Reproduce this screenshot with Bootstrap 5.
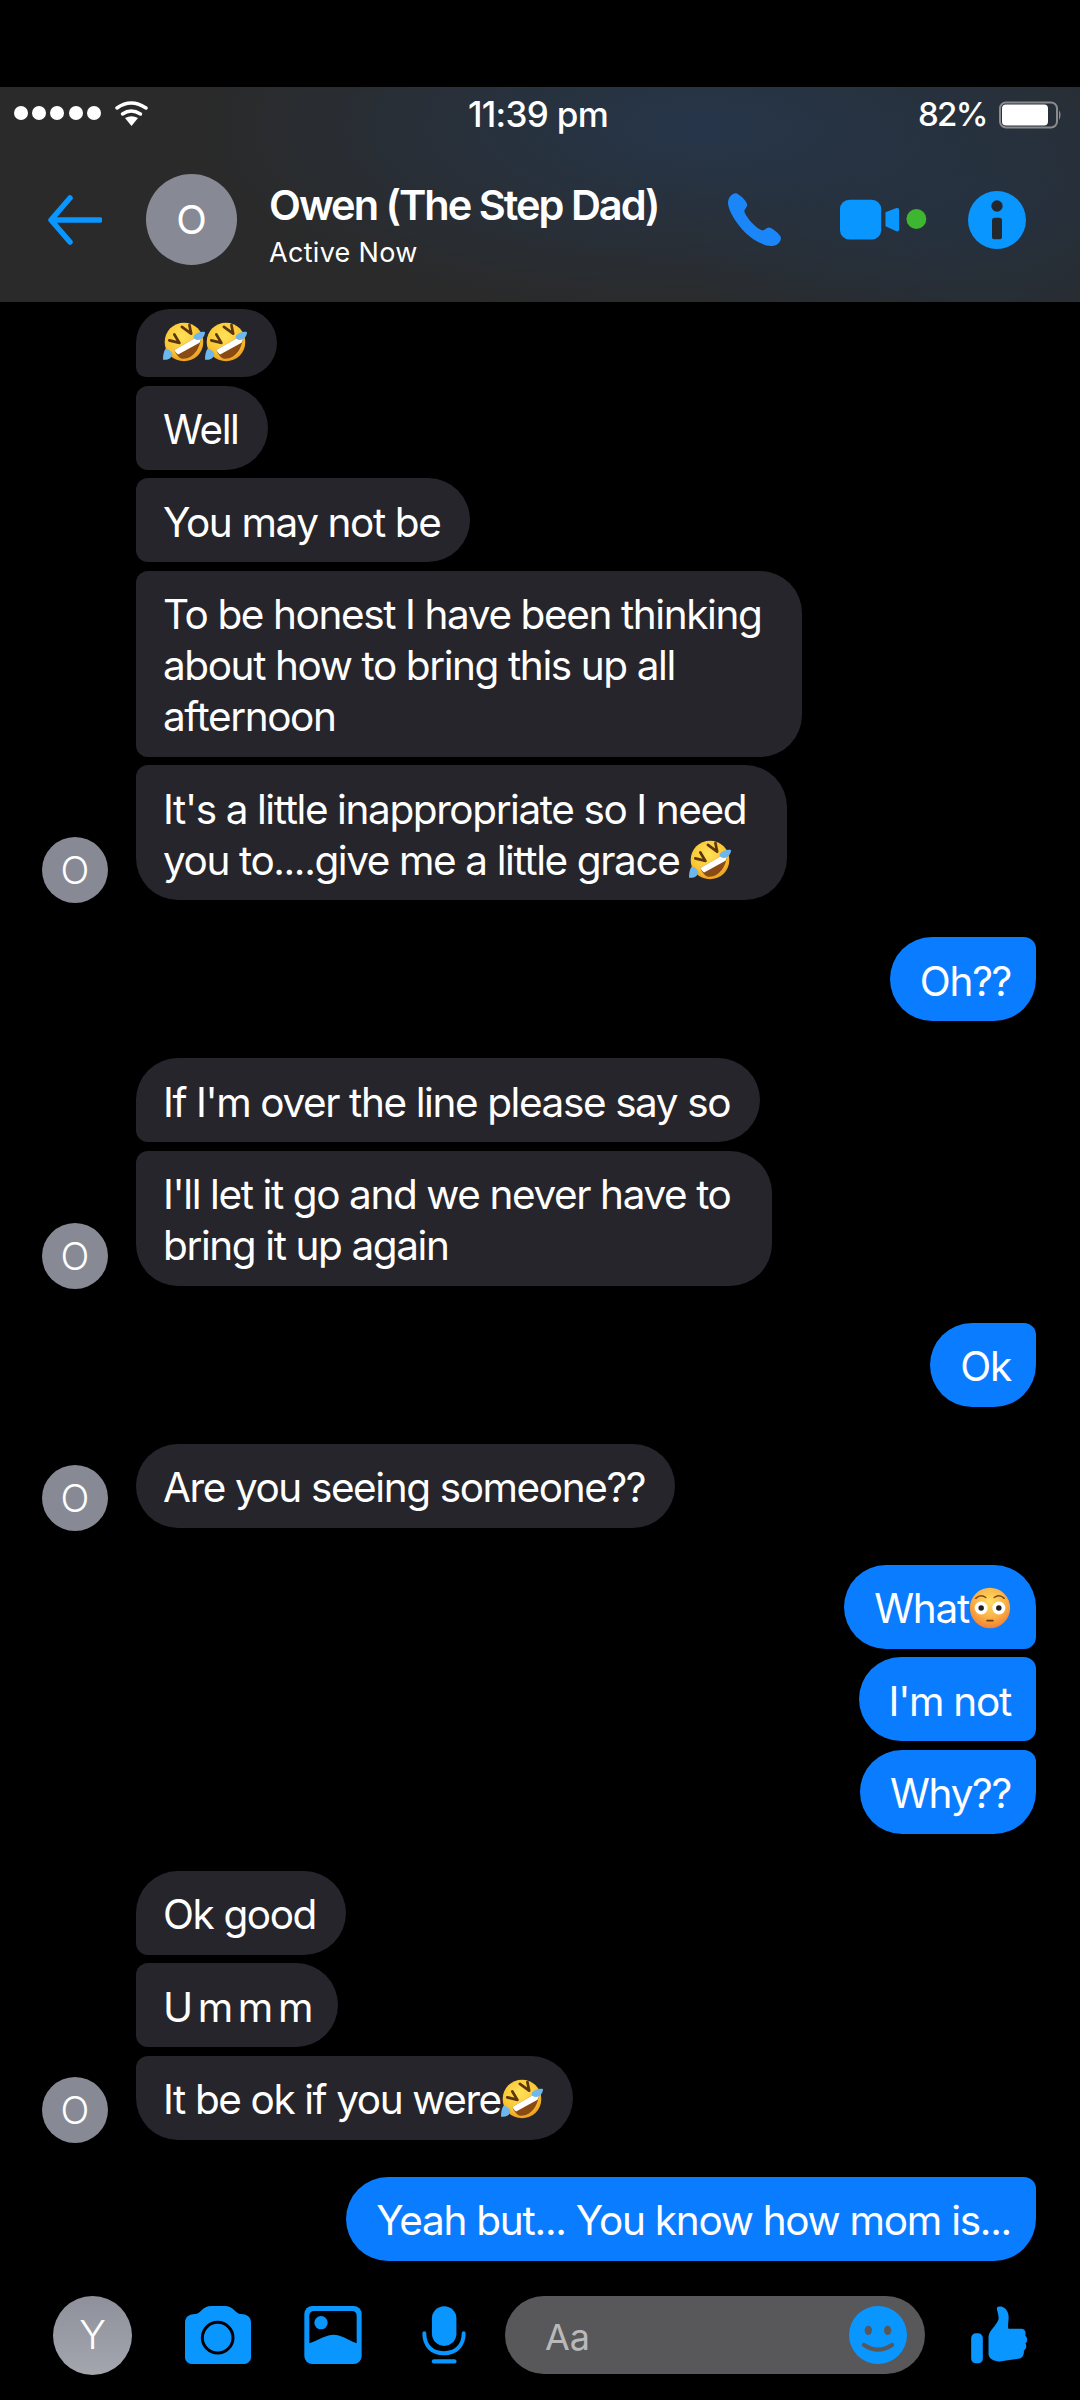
<!DOCTYPE html>
<html lang="en">
<head>
  <meta charset="UTF-8" />
  <meta name="viewport" content="width=device-width, initial-scale=1.0"/>
  <title>Owen (The Step Dad)</title>
  <link href="https://cdn.jsdelivr.net/npm/bootstrap@5.3.3/dist/css/bootstrap.min.css" rel="stylesheet">
  <style>
    body { background: #000; font-family: Inter, "Liberation Sans", sans-serif; color: #fff; }
    .phone-page { width: 1080px; height: 2400px; padding-top: 87px; overflow: hidden; }

    .top-head { height: 215px; background: radial-gradient(ellipse 500px 190px at 700px 40px, #26364a, transparent), radial-gradient(ellipse 300px 200px at 980px 130px, #25303c, transparent), #2a2a2a; }
    .status-bar { height: 52px; padding: 3px 18px 0 14px; font-size: 35px; font-weight: 500; letter-spacing: -.7px; }
    .status-side { width: 220px; }
    .batt-pct { margin-right: 12px; font-size: 33px; letter-spacing: -1.6px; }
    .head-row { height: 163px; padding: 0 0 2px 48px; }
    .face { background: #878a94; font-size: 40px; font-weight: 400; line-height: 1; }
    .face-head { width: 91px; height: 91px; margin: 0 32px 0 44px; }
    .face-msg { width: 66px; height: 66px; font-size: 38px; font-weight: 300; margin: 0 28px -3px 42px; }
    .face-you { width: 79px; height: 79px; background: linear-gradient(#8e919b, #a4a6ae); font-size: 40px; font-weight: 300; }
    .head-title { font-size: 41.5px; font-weight: 600; letter-spacing: -2px; line-height: 50px; margin-top: 10px; }
    .head-sub { font-size: 27px; letter-spacing: .3px; line-height: 34px; margin-top: 6px; }
    .head-icons { margin-left: 69px; }
    .ic-video { margin-left: 59px; }
    .ic-info { margin-left: 41px; }

    .thread { padding: 7px 44px 0 0; }
    .msg-row { margin-top: 8.5px; }
    .msg-row.gap-before { margin-top: 37px; }
    .msg-bubble { font-size: 40.5px; line-height: 51px; letter-spacing: -1.4px; padding: 18.5px 30px 14.5px 27px; white-space: nowrap; border-radius: 42px; }
    .msg-in { background: #26252b; margin-left: 136px; }
    .face-msg + .msg-in { margin-left: 0; }
    .msg-multi { padding-right: 41px; }
    .msg-out { background: #0a7cff; padding-left: 30px; padding-right: 25px; letter-spacing: -1.27px; }
    .msg-emoji-only { padding: 12px 30px 12px 27px; line-height: 44px; }
    .msg-wide-word { letter-spacing: 4.6px; padding-right: 20px; }
    .in-first { border-bottom-left-radius: 12px; }
    .in-mid { border-top-left-radius: 12px; border-bottom-left-radius: 12px; }
    .in-last { border-top-left-radius: 12px; }
    .out-first { border-bottom-right-radius: 12px; }
    .out-mid { border-top-right-radius: 12px; border-bottom-right-radius: 12px; }
    .out-last { border-top-right-radius: 12px; }
    .emo { width: 42px; height: 42px; vertical-align: -6px; }

    .composer { margin-top: 35px; padding-left: 53px; }
    .ic-camera { margin-left: 53px; }
    .ic-image { margin-left: 53px; }
    .ic-mic { margin-left: 60px; }
    .input-pill { width: 420px; height: 78px; margin-left: 39px; padding: 0 18px 0 40px; background: #58585a; font-size: 36px; color: #b9b9b9; }
    .pill-hint { padding-top: 4px; }
    .ic-thumb { margin-left: 46px; }
  </style>
</head>
<body>

  <!-- emoji drawn once, used in the bubbles -->
  <svg width="0" height="0" class="position-absolute">
    <defs>
      <radialGradient id="faceY" cx="45%" cy="35%" r="70%">
        <stop offset="0" stop-color="#ffe25a"/><stop offset=".65" stop-color="#fbc531"/><stop offset="1" stop-color="#e8931c"/>
      </radialGradient>
      <radialGradient id="faceF" cx="50%" cy="35%" r="70%">
        <stop offset="0" stop-color="#ffdf63"/><stop offset=".55" stop-color="#fbb146"/><stop offset="1" stop-color="#f0782e"/>
      </radialGradient>
      <symbol id="rofl" viewBox="0 0 100 100">
        <circle cx="50" cy="50" r="46" fill="url(#faceY)"/>
        <path d="M27 69 L90 33 C92 62 72 92 46 90 C38 88 31 80 27 69Z" fill="#8a4a14"/>
        <path d="M27 69 L90 33 C91 40 90 46 87 52 L36 80 C32 77 29 73 27 69Z" fill="#fff"/>
        <path d="M42 8 L64 24 L60 4 M12 40 L36 46 L24 26" fill="none" stroke="#5b3610" stroke-width="6.5" stroke-linecap="round" stroke-linejoin="round" transform="translate(3 6)"/>
        <path d="M73 36 C78 28 90 24 100 26 C100 36 92 46 82 45 C76 45 72 41 73 36Z" fill="#6bb7ee"/>
        <path d="M6 66 C12 66 22 72 22 80 C20 90 10 94 0 92 C0 82 1 74 6 66Z" fill="#6bb7ee"/>
      </symbol>
      <symbol id="flushed" viewBox="0 0 100 100">
        <circle cx="50" cy="50" r="48" fill="url(#faceF)"/>
        <circle cx="29" cy="50" r="15.5" fill="#fff"/><circle cx="71" cy="50" r="15.5" fill="#fff"/>
        <circle cx="29" cy="50" r="6.5" fill="#222"/><circle cx="71" cy="50" r="6.5" fill="#222"/>
        <path d="M16 27 Q28 16 40 25 M60 25 Q72 16 84 27" fill="none" stroke="#7a4a16" stroke-width="3.5" stroke-linecap="round"/>
        <rect x="41" y="78" width="18" height="4" rx="2" fill="#6b3a10"/>
      </symbol>
    </defs>
  </svg>

  <div class="phone-page d-flex flex-column">

    <header class="top-head d-flex flex-column">
      <div class="status-bar d-flex align-items-center justify-content-between">
        <div class="status-side d-flex align-items-center">
          <svg width="134" height="28" viewBox="0 0 134 28">
            <g fill="#fff"><circle cx="7" cy="12" r="7"/><circle cx="25" cy="12" r="7"/><circle cx="43" cy="12" r="7"/><circle cx="62" cy="12" r="7"/><circle cx="80" cy="12" r="7"/></g>
            <g fill="none" stroke="#fff" stroke-width="3.4" stroke-linecap="round"><path d="M103 7 Q117 -3 132 7"/><path d="M108.500 13 Q117 7 126.500 13"/></g>
            <path d="M111 17 Q117.500 13.500 124 17 L117.500 25Z" fill="#fff"/>
          </svg>
        </div>
        <div>11:39 pm</div>
        <div class="status-side d-flex align-items-center justify-content-end">
          <span class="batt-pct">82%</span>
          <svg width="63" height="28" viewBox="0 0 63 28">
            <rect x="1" y="1.500" width="57" height="25" rx="6" fill="none" stroke="#8b8b8d" stroke-width="2"/>
            <rect x="3" y="3.500" width="46" height="21" rx="4" fill="#fff"/>
            <path d="M60 9 Q63 14 60 19Z" fill="#8b8b8d"/>
          </svg>
        </div>
      </div>
      <div class="head-row d-flex align-items-center">
        <svg width="54" height="50" viewBox="0 0 54 50"><path d="M52 25 H4 M22 3 L3 25 L22 47" fill="none" stroke="#0a96ff" stroke-width="5.500" stroke-linecap="round" stroke-linejoin="round"/></svg>
        <div class="face face-head rounded-circle d-flex align-items-center justify-content-center flex-shrink-0">O</div>
        <div class="flex-shrink-0">
          <div class="head-title">Owen (The Step Dad)</div>
          <div class="head-sub">Active Now</div>
        </div>
        <div class="head-icons d-flex align-items-center">
          <svg width="53" height="53" viewBox="0 0 160 160"><path d="M28 2 C18 -3 2 8 0 28 C-2 60 60 155 130 160 C148 161 163 145 159 132 C150 118 132 104 122 104 C112 106 110 116 100 112 C82 102 58 78 50 58 C47 50 56 46 58 36 C58 26 40 8 28 2Z" fill="#1b86f8"/></svg>
          <svg class="ic-video" width="87" height="42" viewBox="0 0 262 126"><rect x="0" y="2" width="124" height="120" rx="28" fill="#0a96ff"/><path d="M137 40 L170 27 Q178 25 178 33 L178 91 Q178 99 170 97 L137 82Z" fill="#0a96ff"/><circle cx="230" cy="60" r="30" fill="#3fb62f"/></svg>
          <svg class="ic-info" width="58" height="58" viewBox="0 0 174 174"><circle cx="87" cy="87" r="87" fill="#0a96ff"/><circle cx="87" cy="45" r="17" fill="#23282e"/><rect x="72" y="80" width="30" height="65" rx="8" fill="#23282e"/></svg>
        </div>
      </div>
    </header>

    <main class="thread flex-grow-0">
      <div class="msg-row d-flex align-items-end mt-0">
        <div class="msg-bubble msg-in msg-emoji-only in-first"><svg class="emo d-inline-block"><use href="#rofl"/></svg><svg class="emo d-inline-block"><use href="#rofl"/></svg></div>
      </div>
      <div class="msg-row d-flex"><div class="msg-bubble msg-in in-mid">Well</div></div>
      <div class="msg-row d-flex"><div class="msg-bubble msg-in in-mid">You may not be</div></div>
      <div class="msg-row d-flex"><div class="msg-bubble msg-in msg-multi in-mid">To be honest I have been thinking<br>about how to bring this up all<br>afternoon</div></div>
      <div class="msg-row d-flex align-items-end">
        <div class="face face-msg rounded-circle d-flex align-items-center justify-content-center flex-shrink-0">O</div>
        <div class="msg-bubble msg-in msg-multi in-last">It's a little inappropriate so I need<br>you to....give me a little grace <svg class="emo d-inline-block"><use href="#rofl"/></svg></div>
      </div>

      <div class="msg-row gap-before d-flex justify-content-end"><div class="msg-bubble msg-out out-last">Oh??</div></div>

      <div class="msg-row gap-before d-flex"><div class="msg-bubble msg-in in-first">If I'm over the line please say so</div></div>
      <div class="msg-row d-flex align-items-end">
        <div class="face face-msg rounded-circle d-flex align-items-center justify-content-center flex-shrink-0">O</div>
        <div class="msg-bubble msg-in msg-multi in-last">I'll let it go and we never have to<br>bring it up again</div>
      </div>

      <div class="msg-row gap-before d-flex justify-content-end"><div class="msg-bubble msg-out out-last">Ok</div></div>

      <div class="msg-row gap-before d-flex align-items-end">
        <div class="face face-msg rounded-circle d-flex align-items-center justify-content-center flex-shrink-0">O</div>
        <div class="msg-bubble msg-in">Are you seeing someone??</div>
      </div>

      <div class="msg-row gap-before d-flex justify-content-end"><div class="msg-bubble msg-out out-first">What<svg class="emo d-inline-block"><use href="#flushed"/></svg></div></div>
      <div class="msg-row d-flex justify-content-end"><div class="msg-bubble msg-out out-mid">I'm not</div></div>
      <div class="msg-row d-flex justify-content-end"><div class="msg-bubble msg-out out-last">Why??</div></div>

      <div class="msg-row gap-before d-flex"><div class="msg-bubble msg-in in-first">Ok good</div></div>
      <div class="msg-row d-flex"><div class="msg-bubble msg-in in-mid msg-wide-word">Ummm</div></div>
      <div class="msg-row d-flex align-items-end">
        <div class="face face-msg rounded-circle d-flex align-items-center justify-content-center flex-shrink-0">O</div>
        <div class="msg-bubble msg-in in-last">It be ok if you were<svg class="emo d-inline-block"><use href="#rofl"/></svg></div>
      </div>

      <div class="msg-row gap-before d-flex justify-content-end"><div class="msg-bubble msg-out out-last">Yeah but... You know how mom is...</div></div>
    </main>

    <footer class="composer d-flex align-items-center">
      <div class="face face-you rounded-circle d-flex align-items-center justify-content-center flex-shrink-0">Y</div>
      <svg class="ic-camera" width="66" height="58" viewBox="0 0 198 174"><path d="M0 50 C0 32 14 24 30 24 C48 24 50 0 80 0 H118 C148 0 150 24 168 24 C184 24 198 32 198 50 V154 C198 166 188 174 178 174 H20 C10 174 0 166 0 154Z" fill="#0a96ff"/><circle cx="98" cy="95" r="46" fill="#0a96ff" stroke="#000" stroke-width="9"/></svg>
      <svg class="ic-image" width="58" height="58" viewBox="0 0 172 174"><rect width="172" height="174" rx="24" fill="#0a96ff"/><path d="M15 30 Q15 15 30 15 H142 Q157 15 157 30 V112 C130 100 108 86 88 86 C68 86 44 100 15 112Z" fill="#000"/><circle cx="50" cy="50" r="20" fill="#0a96ff"/></svg>
      <svg class="ic-mic" width="44" height="58" viewBox="0 0 133 174"><rect x="30" y="0" width="74" height="120" rx="37" fill="#0a96ff"/><path d="M7 82 C7 120 30 142 66 142 C102 142 126 120 126 82" fill="none" stroke="#0a96ff" stroke-width="12" stroke-linecap="round"/><path d="M36 167 H98" stroke="#0a96ff" stroke-width="13" stroke-linecap="round"/></svg>
      <div class="input-pill rounded-pill d-flex align-items-center justify-content-between">
        <span class="pill-hint">Aa</span>
        <svg width="58" height="58" viewBox="0 0 174 174"><circle cx="87" cy="87" r="87" fill="#0a96ff"/><ellipse cx="58" cy="73" rx="11" ry="14" fill="#58585a"/><ellipse cx="116" cy="73" rx="11" ry="14" fill="#58585a"/><path d="M45 117 Q87 145 129 117" fill="none" stroke="#58585a" stroke-width="13" stroke-linecap="round"/></svg>
      </div>
      <svg class="ic-thumb" width="56" height="58" viewBox="0 0 167 174"><rect x="0" y="82" width="35" height="90" rx="14" fill="#0a96ff"/><path d="M52 92 C54 72 76 60 82 40 C84 25 74 10 78 4 C84 -2 108 0 112 28 C114 45 108 60 112 68 H150 C160 68 166 76 162 88 C169 94 170 106 163 112 C168 120 164 130 158 134 C160 146 152 158 142 158 L90 166 C70 168 52 158 52 144Z" fill="#0a96ff"/></svg>
    </footer>

  </div>

</body>
</html>
